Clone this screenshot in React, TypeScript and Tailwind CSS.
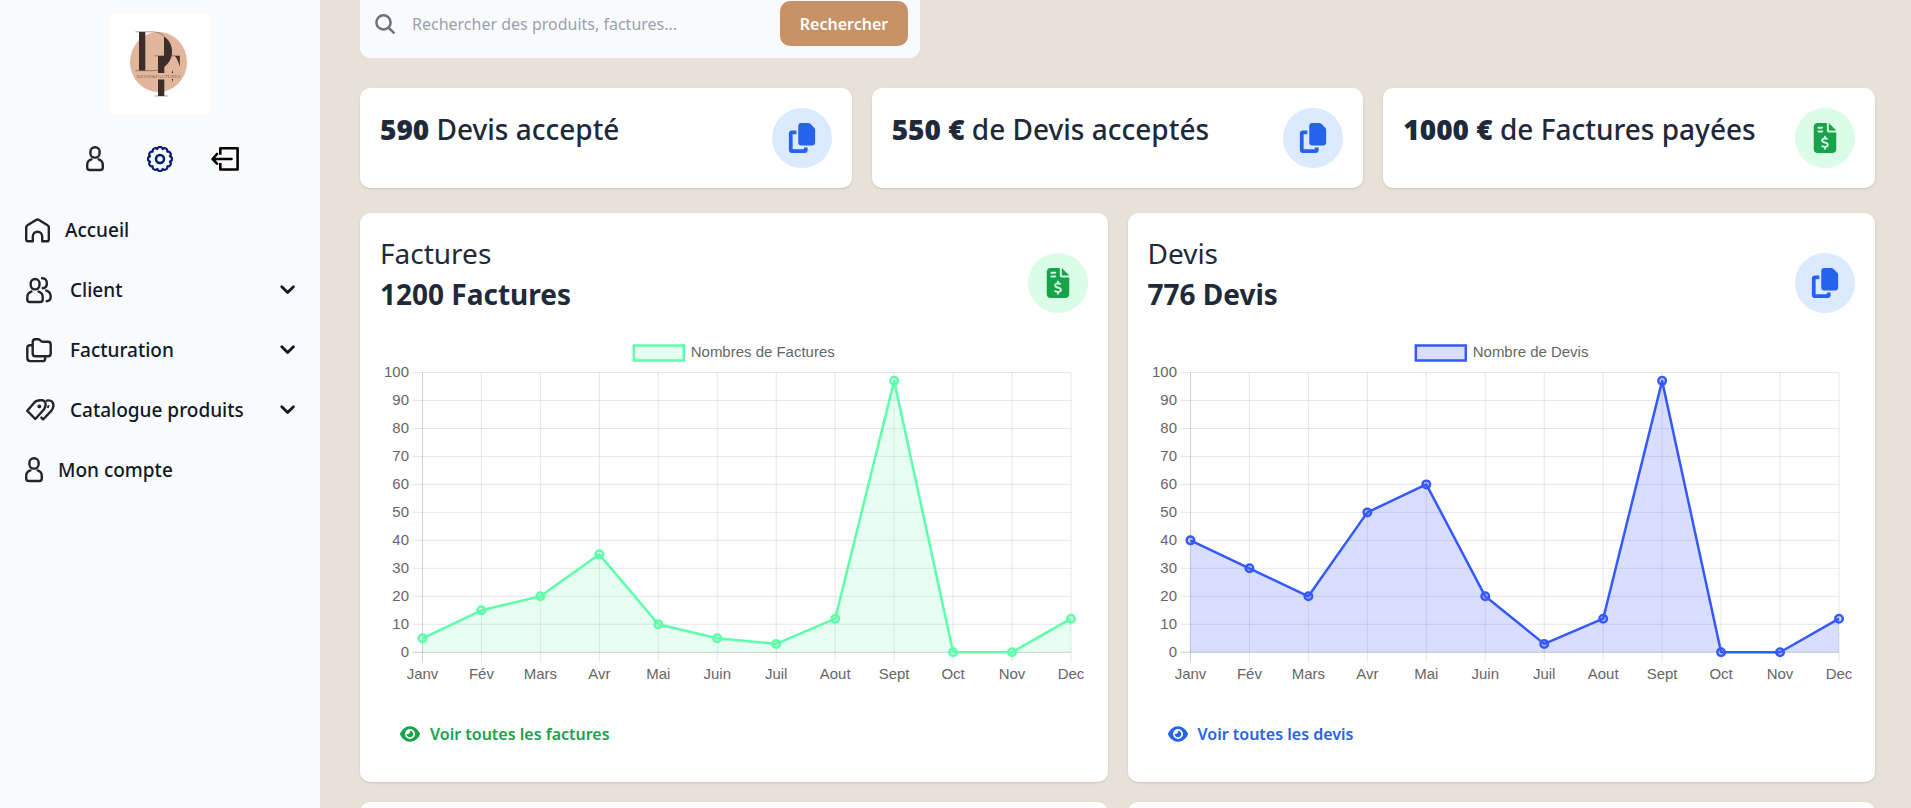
import type { ReactNode } from "react";
import { FaCopy, FaEye, FaFileInvoiceDollar } from "react-icons/fa6";

type Tone = "green" | "blue";

function UserIcon() {
  return (
    <svg width="18" height="26" viewBox="0 0 18 26" fill="none" stroke="#212529" strokeWidth="2.4" strokeLinecap="round" aria-hidden="true">
      <rect x="4.4" y="1.2" width="9.2" height="10.4" rx="4.4" />
      <path d="M5.4 13.4C2.9 14.1 1.2 16.3 1.2 19v2.600c0 1.600.8 2.400 2.400 2.400h10.800c1.600 0 2.400-.8 2.400-2.400V19c0-2.700-1.700-4.900-4.200-5.600" />
    </svg>
  );
}

function GearIcon() {
  const bumps = 12;
  const radius = 10.3;
  const point = (i: number) => {
    const a = ((i + 0.5) * 2 * Math.PI) / bumps;
    return `${(13 + radius * Math.cos(a)).toFixed(2)} ${(13 + radius * Math.sin(a)).toFixed(2)}`;
  };
  const d =
    `M${point(0)}` +
    Array.from({ length: bumps }, (_, i) => `A2.75 2.75 0 0 1 ${point(i + 1)}`).join("") +
    "Z";
  return (
    <svg width="26" height="26" viewBox="0 0 26 26" fill="none" stroke="#001a72" strokeWidth="2.2" strokeLinejoin="round" aria-hidden="true">
      <path d={d} />
      <circle cx="13" cy="13" r="4" strokeWidth="2.5" />
    </svg>
  );
}

function ExitIcon() {
  return (
    <svg width="28" height="24" viewBox="0 0 28 24" fill="none" stroke="#000" strokeWidth="2.6" aria-hidden="true">
      <path d="M9.3 7.8V1.3H26.600V22.500H9.300V16" strokeLinejoin="round" />
      <path d="M1.800 12H20.500M6 7 1.600 12 6 16.600" strokeLinecap="round" strokeLinejoin="round" />
    </svg>
  );
}

function HomeIcon() {
  return (
    <svg width="25" height="25" viewBox="0 0 25 25" fill="none" stroke="#212529" strokeWidth="2.400" strokeLinejoin="round" aria-hidden="true">
      <path d="M1.200 9.200c0-1 .3-1.500 1.200-2L11.400 1.800c.8-.5 1.400-.5 2.200 0l9 5.400c.9.5 1.200 1 1.200 2V21.400c0 1.300-.6 1.900-1.900 1.900H17.200V18.500a4.700 4.700 0 0 0-9.400 0v4.800H3.100c-1.300 0-1.900-.6-1.900-1.900Z" />
    </svg>
  );
}

function ClientsIcon() {
  return (
    <svg width="26" height="27" viewBox="0 0 26 27" fill="none" stroke="#212529" strokeWidth="2.400" strokeLinecap="round" aria-hidden="true">
      <rect x="4.700" y="2" width="8.800" height="10.400" rx="4.300" />
      <path d="M5.400 14.600C3 15.300 1.300 17.400 1.300 20.200v2.200c0 1.800.9 2.600 2.600 2.600h10.200c1.700 0 2.600-.8 2.600-2.600v-2.200c0-2.800-1.700-4.900-4.100-5.600" />
      <path d="M16 1.300c3.200-.2 4.900 1.800 4.900 4.900s-1.600 4.900-4.200 5" />
      <path d="M20.300 13.600c3 .9 4.400 3.200 4.400 6.200 0 2.700-1.200 4.200-4 4.400" />
    </svg>
  );
}

function FoldersIcon() {
  return (
    <svg width="26" height="25" viewBox="0 0 26 25" fill="none" stroke="#212529" strokeWidth="2.400" strokeLinecap="round" strokeLinejoin="round" aria-hidden="true">
      <path d="M6.700 4c0-1.800 1-2.700 2.700-2.700h3.200c1.700 0 2 2.500 4 2.500h5.400c1.800 0 2.700.9 2.700 2.700v9c0 1.800-.9 2.700-2.700 2.700H9.400c-1.700 0-2.700-.9-2.700-2.700Z" />
      <path d="M5.900 7.200H4.300c-2 0-3 1-3 3v9.900c0 2 1 3 3 3h11.900c2 0 3-.9 3-2.700v-1.700" />
    </svg>
  );
}

function TagsIcon() {
  return (
    <svg width="29" height="22" viewBox="0 0 29 22" fill="none" stroke="#212529" strokeWidth="2.400" strokeLinejoin="round" aria-hidden="true">
      <path d="M1.300 11.800 8.400 3.400C9.800 1.700 12.400 1 16 1.300c2.600.2 4 2.200 3.500 5.200-.3 1.900-.6 2.900-1.800 4.200L9.300 20Z" />
      <circle cx="13.300" cy="7.400" r="1.900" fill="#212529" stroke="none" />
      <path d="M20.800 1.600c4.600-.9 7.200 1.700 6.500 6-.3 1.900-.8 2.900-2.100 4.300L17.100 20.500l-1.700-1.900" strokeLinecap="round" />
      <path d="M22.700 6.200 21.700 9" strokeWidth="1.900" />
    </svg>
  );
}

function Chevron() {
  return (
    <svg width="16" height="10" viewBox="0 0 16 10" fill="none" stroke="#111827" strokeWidth="2.800" strokeLinecap="round" strokeLinejoin="round" aria-hidden="true">
      <path d="M1.800 1.800 7.600 7.600 13.400 1.800" />
    </svg>
  );
}

function Logo() {
  return (
    <svg width="100" height="100" viewBox="0 0 100 100" role="img" aria-label="Devis&Factures" className="bg-white">
      <ellipse cx="48.500" cy="48" rx="28.500" ry="30" fill="#e2b69d" />
      <g fill="#3f2d29">
        <rect x="29" y="18" width="6.300" height="38.500" />
        <path d="M54 22.500C59.500 26 62 32 62 37.500c0 6.500-3 12-8 15.500Z" />
        <rect x="48" y="42" width="6.300" height="17" />
        <rect x="48" y="65.500" width="6.300" height="16.500" />
        <path d="M65 42h4.800v11C68.500 48 67 44.500 65 42Z" />
        <path d="M62.500 56l.7 3h-1.400ZM62.500 68l.7-3h-1.400Z" />
      </g>
      <g fill="none" stroke="#3f2d29" strokeWidth=".6" opacity=".75">
        <path d="M25.500 17.800H43c5 0 9 2 11.500 5M25.500 56.700H42c5 0 9-1 12-3.500M44.500 41.800H70M44.500 82H58" />
      </g>
      <text x="48.700" y="64" textAnchor="middle" fontFamily="Liberation Serif, serif" fontSize="5" fill="#8d6857">
        DEVIS&amp;FACTURES
      </text>
    </svg>
  );
}

function NavLink({ icon, label }: { icon: ReactNode; label: string }) {
  return (
    <li>
      <a href="#" className="flex h-[60px] items-center gap-[15px] px-[25px]">
        {icon}
        <span>{label}</span>
      </a>
    </li>
  );
}

function NavGroup({ icon, label }: { icon: ReactNode; label: string }) {
  return (
    <li>
      <button type="button" aria-expanded="false" className="flex h-[60px] w-full items-center px-6 text-left">
        <span className="flex w-[46px] pl-[2px]">{icon}</span>
        <span className="flex-1">{label}</span>
        <Chevron />
      </button>
    </li>
  );
}

function Sidebar() {
  return (
    <aside className="w-80 shrink-0 bg-gray-50 pt-[14px]">
      <a href="#" className="mx-auto block w-[100px]">
        <Logo />
      </a>
      <div className="mt-8 flex h-[26px] items-center justify-center">
        <a href="#" aria-label="Profil" className="flex w-[65px] justify-center"><UserIcon /></a>
        <a href="#" aria-label="Paramètres" className="flex w-[65px] justify-center"><GearIcon /></a>
        <a href="#" aria-label="Déconnexion" className="flex w-[65px] justify-center"><ExitIcon /></a>
      </div>
      <nav className="mt-7">
        <ul className="text-[19px] font-medium text-gray-900">
          <NavLink icon={<HomeIcon />} label="Accueil" />
          <NavGroup icon={<ClientsIcon />} label="Client" />
          <NavGroup icon={<FoldersIcon />} label="Facturation" />
          <NavGroup icon={<TagsIcon />} label="Catalogue produits" />
          <NavLink icon={<UserIcon />} label="Mon compte" />
        </ul>
      </nav>
    </aside>
  );
}

function Badge({ tone }: { tone: Tone }) {
  return tone === "blue" ? (
    <span className="flex size-[60px] shrink-0 items-center justify-center rounded-full bg-blue-100 text-[#2563eb]">
      <FaCopy size={30} />
    </span>
  ) : (
    <span className="flex size-[60px] shrink-0 items-center justify-center rounded-full bg-green-100 text-[#16a34a]">
      <FaFileInvoiceDollar size={30} />
    </span>
  );
}

function StatCard({ value, label, tone }: { value: string; label: string; tone: Tone }) {
  return (
    <section className="flex items-start justify-between rounded-[10px] bg-white p-5 shadow">
      <h2 className="text-[28px] leading-[42px] font-medium text-gray-800">
        <span className="font-black">{value}</span> {label}
      </h2>
      <Badge tone={tone} />
    </section>
  );
}

const months = ["Janv", "Fév", "Mars", "Avr", "Mai", "Juin", "Juil", "Aout", "Sept", "Oct", "Nov", "Dec"];

const plot = { left: 42.5, right: 691.5, top: 39.5, bottom: 319.5 };

function LineChart({ legend, data, color, fill, legendX }: { legend: string; data: number[]; color: string; fill: string; legendX: number }) {
  const x = (i: number) => plot.left + (i * (plot.right - plot.left)) / 11;
  const y = (v: number) => plot.bottom - (v * (plot.bottom - plot.top)) / 100;
  const line = data.map((v, i) => `${x(i)},${y(v)}`).join(" ");
  return (
    <svg viewBox="0 0 708 354" className="block h-auto w-full" role="img" aria-label={legend} fontFamily="Liberation Sans, Arial, sans-serif" fontSize="15">
      <rect x={legendX} y="12.500" width="50" height="15" fill={fill} stroke={color} strokeWidth="2.500" />
      <text x={legendX + 57} y="24.500" fill="#666">{legend}</text>
      {months.map((m, i) => (
        <g key={m}>
          <line x1={x(i)} x2={x(i)} y1={plot.top} y2={plot.bottom + 10} stroke="#000" strokeOpacity={i === 0 ? 0.2 : 0.1} />
          <text x={x(i)} y="346" textAnchor="middle" fill="#666">{m}</text>
        </g>
      ))}
      {Array.from({ length: 11 }, (_, i) => i * 10).map((v) => (
        <g key={v}>
          <line x1={plot.left - 10} x2={plot.right} y1={y(v)} y2={y(v)} stroke="#000" strokeOpacity={v === 0 ? 0.2 : 0.1} />
          <text x="29" y={y(v) + 5} textAnchor="end" fill="#666">{v}</text>
        </g>
      ))}
      <polygon points={`${plot.left},${plot.bottom} ${line} ${plot.right},${plot.bottom}`} fill={fill} />
      <polyline points={line} fill="none" stroke={color} strokeWidth="2.500" strokeLinejoin="round" />
      {data.map((v, i) => (
        <circle key={months[i]} cx={x(i)} cy={y(v)} r="3.750" fill={fill} stroke={color} strokeWidth="2.500" />
      ))}
    </svg>
  );
}

function ChartCard({ title, total, tone, link, children }: { title: string; total: string; tone: Tone; link: string; children: ReactNode }) {
  return (
    <section className="rounded-[10px] bg-white p-5 shadow">
      <div className="flex items-start justify-between text-gray-800">
        <div className="text-[28px] leading-[41px]">
          <h2>{title}</h2>
          <p className="font-bold">{total}</p>
        </div>
        <div className="pt-5">
          <Badge tone={tone} />
        </div>
      </div>
      <div className="mt-[18px]">{children}</div>
      <a
        href="#"
        className={
          tone === "green"
            ? "mt-5 inline-flex h-[55px] items-center gap-[10px] px-5 text-base font-semibold text-[#16a34a]"
            : "mt-5 inline-flex h-[55px] items-center gap-[10px] px-5 text-base font-semibold text-[#2563eb]"
        }
      >
        <FaEye size={20} />
        {link}
      </a>
    </section>
  );
}

export default function App() {
  return (
    <div className="flex h-screen overflow-hidden bg-[#e8e1d7] font-['Noto_Sans','Open_Sans',sans-serif]">
      <Sidebar />
      <main className="min-w-0 flex-1 pr-9 pl-10">
        <form role="search" className="flex w-[560px] max-w-full items-center rounded-b-[10px] bg-gray-50 pt-px pr-3 pb-3 pl-[15px]">
          <svg width="20" height="20" viewBox="0 0 20 20" fill="none" stroke="#6b7280" strokeWidth="2.500" strokeLinejoin="round" aria-hidden="true">
            <path d="m19.400 19.400-5.600-5.600M15.600 8.400a7.100 7.100 0 1 1-14.200 0 7.100 7.100 0 0 1 14.200 0Z" />
          </svg>
          <input
            type="search"
            aria-label="Rechercher"
            placeholder="Rechercher des produits, factures..."
            className="h-[45px] min-w-0 flex-1 bg-transparent px-[17px] text-base text-gray-900 outline-none placeholder:text-gray-400"
          />
          <button type="submit" className="h-[45px] w-32 rounded-[10px] bg-[#c79266] text-base font-semibold text-white">
            Rechercher
          </button>
        </form>
        <div className="mt-[30px] grid grid-cols-3 gap-5">
          <StatCard value="590" label="Devis accepté" tone="blue" />
          <StatCard value="550 €" label="de Devis acceptés" tone="blue" />
          <StatCard value="1000 €" label="de Factures payées" tone="green" />
        </div>
        <div className="mt-[25px] grid grid-cols-2 gap-5">
          <ChartCard title="Factures" total="1200 Factures" tone="green" link="Voir toutes les factures">
            <LineChart legend="Nombres de Factures" data={[5, 15, 20, 35, 10, 5, 3, 12, 97, 0, 0, 12]} color="#5dffaa" fill="rgba(93,255,170,0.15)" legendX={254} />
          </ChartCard>
          <ChartCard title="Devis" total="776 Devis" tone="blue" link="Voir toutes les devis">
            <LineChart legend="Nombre de Devis" data={[40, 30, 20, 50, 60, 20, 3, 12, 97, 0, 0, 12]} color="#3459ff" fill="rgba(52,82,255,0.19)" legendX={268} />
          </ChartCard>
          <section className="min-h-40 rounded-[10px] bg-white shadow" />
          <section className="min-h-40 rounded-[10px] bg-white shadow" />
        </div>
      </main>
    </div>
  );
}
